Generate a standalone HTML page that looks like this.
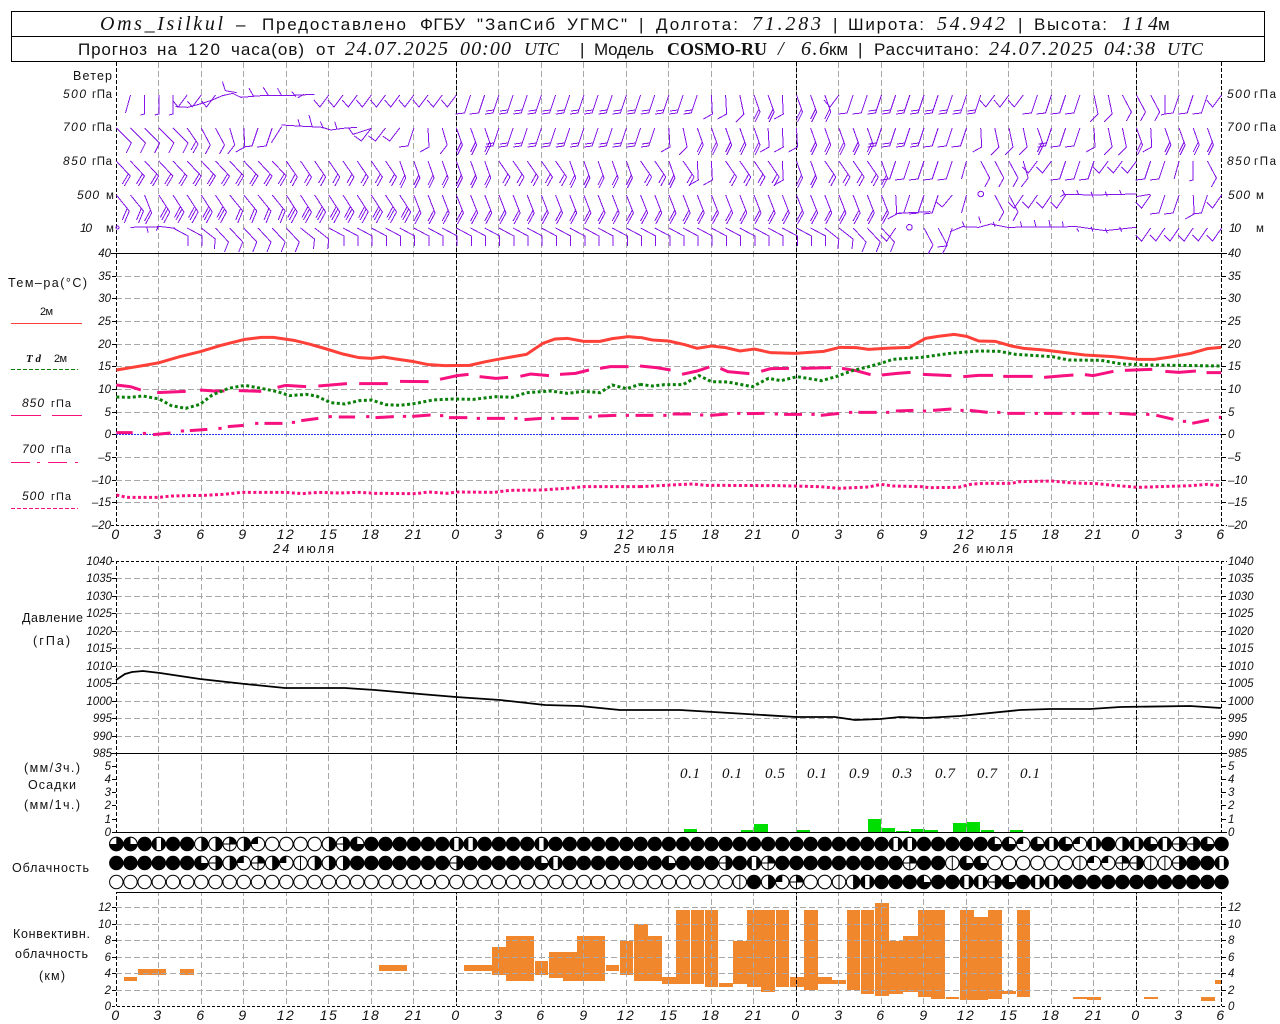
<!DOCTYPE html>
<html><head><meta charset="utf-8"><title>Oms_Isilkul</title>
<style>
html,body{margin:0;padding:0;background:#fff}
svg{display:block}
text{font-family:"Liberation Sans","Noto Sans CJK SC",sans-serif;fill:#111}
.i{font-style:italic}
.s{font-family:"Liberation Serif","Noto Serif CJK SC",serif;font-style:italic}
.t{font-size:17px}
.t .s{font-size:20px}
.l{font-size:12.5px}
.n{font-size:11.5px;font-style:italic}
.h{font-size:14px;font-style:italic;text-anchor:middle;letter-spacing:1.5px}
.z path{vector-effect:non-scaling-stroke;fill:none}
.e text{text-anchor:end}
.w{shape-rendering:crispEdges}
</style></head><body>
<svg xmlns="http://www.w3.org/2000/svg" width="1280" height="1024" viewBox="0 0 1280 1024">
<defs>
<clipPath id="c1"><rect x="0" y="62" width="1280" height="463"/><rect x="0" y="561" width="1280" height="271"/><rect x="0" y="892" width="1280" height="114"/></clipPath>
<clipPath id="c2"><rect x="0" y="62" width="1280" height="463"/><rect x="0" y="561" width="1280" height="192"/><rect x="0" y="892" width="1280" height="114"/></clipPath>
<path id="a" d="M0 0L14 15L8 25M12 13L6 23"/>
<path id="b" d="M0 0L11 16L6 25M9 13L4 22"/>
<path id="c" d="M0 0L6 17L1 27M5 14L0 24"/>
<path id="d" d="M0 0L15 15L10 25"/>
<path id="e" d="M0 0L9 17L4 26"/>
<path id="f" d="M0 0L5 17L-2 26"/>
<path id="g" d="M0 0L-6 18L-15 19"/>
<path id="g0" d="M0 0L-5 18"/>
<path id="i" d="M0 0L0 19L-4 20"/>
<path id="h" d="M0 0L-6 18L-14 19M-5 15L-13 16"/>
<path id="r" d="M0 0L1 19L-8 24"/>
<path id="q" d="M0 0L4 19L-4 27"/>
<path id="u" d="M0 0L11 17L5 28M9 14L3 25M7.5 11.5L1.5 22.5"/>
<path id="v" d="M0 0L7 18L1 29M6 15L0 26"/>
<path id="w" d="M0 0L13 16L8 28M11 13L6 25"/>
<path id="x" d="M0 0L15 8L15 18"/>
<path id="y" d="M0 0L13 14L9 24"/>
<path id="z" d="M0 0L14 11L13 21"/>
<g id="A"><use href="#a"/><use href="#a" x="14.17"/><use href="#a" x="28.34"/><use href="#a" x="42.51"/></g>
<g id="B"><use href="#b"/><use href="#b" x="14.17"/><use href="#b" x="28.34"/><use href="#b" x="42.51"/></g>
<g id="C"><use href="#c"/><use href="#c" x="14.17"/><use href="#c" x="28.34"/><use href="#c" x="42.51"/></g>
<g id="H"><use href="#h"/><use href="#h" x="14.17"/><use href="#h" x="28.34"/><use href="#h" x="42.51"/></g>
<g id="X"><use href="#x"/><use href="#x" x="14.17"/><use href="#x" x="28.34"/><use href="#x" x="42.51"/></g>
<g id="U"><use href="#u"/><use href="#u" x="14.17"/><use href="#u" x="28.34"/><use href="#u" x="42.51"/></g>
<g id="V"><use href="#v"/><use href="#v" x="14.17"/><use href="#v" x="28.34"/><use href="#v" x="42.51"/></g>
<g id="oO"><circle r="6.7" fill="#fff" stroke="#000"/></g>
<g id="oH"><circle r="6.7" fill="#fff" stroke="#000"/><path d="M0-7A7 7 0 0 1 0 7Z"/></g>
<g id="oI"><circle r="7.1"/><rect x="-2.2" y="-6" width="4.4" height="12" fill="#fff"/></g>
<g id="oL"><circle r="6.7" fill="#fff" stroke="#000"/><path d="M0-7V7" stroke="#000" fill="none"/></g>
<g id="oR"><circle r="6.7" fill="#fff" stroke="#000"/><path d="M0 0V-7A7 7 0 1 0 7 0Z"/></g>
<g id="oQ"><circle r="6.7" fill="#fff" stroke="#000"/><path d="M0 0H-7A7 7 0 1 0 0-7Z"/></g>
<g id="oB"><circle r="6.7" fill="#fff" stroke="#000"/><path d="M0 0H-7A7 7 0 0 1 0-7Z"/></g>
<g id="oK"><circle r="6.7" fill="#fff" stroke="#000"/><path d="M0 0V-7A7 7 0 0 1 7 0Z"/><path d="M0-7V7M-7 0H7" stroke="#000" fill="none"/></g>
<g id="oE"><circle r="6.7" fill="#fff" stroke="#000"/><path d="M0-7A7 7 0 0 1 0 7Z"/><path d="M-7 0H7" stroke="#000" fill="none"/></g>
</defs>
<rect width="1280" height="1024" fill="#fff"/>

<!-- header -->
<g fill="none" stroke="#000" shape-rendering="crispEdges"><rect x="11.5" y="11.5" width="1253" height="50"/><path d="M11 36.5H1265"/></g>
<g class="t">
<text class="s" x="100" y="30" textLength="123">Oms_Isilkul</text>
<text x="236" y="30">–</text>
<text x="262" y="30" textLength="144">Предоставлено</text>
<text x="420" y="30" textLength="45">ФГБУ</text>
<text x="477" y="30" textLength="78">"ЗапСиб</text>
<text x="567" y="30" textLength="60">УГМС"</text>
<text x="639" y="30">|</text>
<text x="656" y="30" textLength="82">Долгота:</text>
<text class="s" x="752" y="30" textLength="69">71.283</text>
<text x="833" y="30">|</text>
<text x="848" y="30" textLength="76">Широта:</text>
<text class="s" x="937" y="30" textLength="68">54.942</text>
<text x="1018" y="30">|</text>
<text x="1034" y="30" textLength="73">Высота:</text>
<text class="s" x="1122" y="30" textLength="36">114</text>
<text x="1158" y="30" textLength="11">м</text>
<text x="78" y="55" textLength="69">Прогноз</text>
<text x="157" y="55" textLength="20">на</text>
<text x="188" y="55" textLength="32">120</text>
<text x="231" y="55" textLength="73">часа(ов)</text>
<text x="316" y="55" textLength="19">от</text>
<text class="s" x="345" y="55" textLength="103">24.07.2025</text>
<text class="s" x="460" y="55" textLength="51">00:00</text>
<text class="s" x="524" y="55" textLength="35" style="font-size:18px">UTC</text>
<text x="580" y="55">|</text>
<text x="594" y="55" textLength="60">Модель</text>
<text x="667" y="55" textLength="100" style="font-family:'Liberation Serif',serif;font-weight:bold;font-size:18px">COSMO-RU</text>
<text class="s" x="778" y="55">/</text>
<text class="s" x="801" y="55" textLength="28">6.6</text>
<text x="829" y="55" textLength="19">км</text>
<text x="858" y="55">|</text>
<text x="874" y="55" textLength="105">Рассчитано:</text>
<text class="s" x="989" y="55" textLength="104">24.07.2025</text>
<text class="s" x="1104" y="55" textLength="51">04:38</text>
<text class="s" x="1167" y="55" textLength="36" style="font-size:18px">UTC</text>
</g>

<!-- convective bars (under grid) -->
<g fill="#f0872d" shape-rendering="crispEdges">
<rect x="124" y="977" width="13" height="4"/><rect x="138" y="969" width="28" height="6"/><rect x="180" y="969" width="14" height="6"/><rect x="379" y="965" width="28" height="6"/><rect x="464" y="965" width="28" height="6"/><rect x="492" y="947" width="14" height="28"/><rect x="506" y="936" width="28" height="45"/><rect x="535" y="961" width="13" height="14"/><rect x="549" y="952" width="14" height="26"/><rect x="563" y="952" width="14" height="29"/><rect x="577" y="936" width="28" height="45"/><rect x="606" y="965" width="13" height="6"/><rect x="620" y="941" width="13" height="34"/><rect x="634" y="924" width="14" height="57"/><rect x="648" y="936" width="14" height="45"/><rect x="662" y="977" width="14" height="7"/><rect x="676" y="910" width="14" height="74"/><rect x="691" y="910" width="13" height="74"/><rect x="705" y="910" width="13" height="77"/><rect x="719" y="983" width="14" height="4"/><rect x="733" y="941" width="14" height="43"/><rect x="747" y="910" width="14" height="77"/><rect x="761" y="910" width="14" height="82"/><rect x="776" y="910" width="13" height="77"/><rect x="790" y="977" width="14" height="10"/><rect x="804" y="910" width="14" height="80"/><rect x="818" y="977" width="14" height="7"/><rect x="832" y="980" width="14" height="4"/><rect x="847" y="910" width="13" height="80"/><rect x="861" y="910" width="13" height="84"/><rect x="875" y="903" width="14" height="93"/><rect x="889" y="941" width="14" height="53"/><rect x="903" y="936" width="15" height="56"/><rect x="918" y="910" width="13" height="87"/><rect x="931" y="910" width="14" height="89"/><rect x="946" y="997" width="13" height="2"/><rect x="960" y="910" width="14" height="90"/><rect x="974" y="917" width="14" height="83"/><rect x="988" y="910" width="14" height="89"/><rect x="1002" y="991" width="14" height="3"/><rect x="1017" y="910" width="13" height="87"/><rect x="1073" y="997" width="14" height="2"/><rect x="1087" y="997" width="14" height="3"/><rect x="1144" y="997" width="14" height="2"/><rect x="1201" y="997" width="14" height="4"/><rect x="1215" y="980" width="7" height="4"/>
</g>
<!-- precip bars -->
<g fill="#00dd00" shape-rendering="crispEdges">
<rect x="684" y="829" width="13" height="3"/><rect x="741" y="830" width="13" height="2"/><rect x="754" y="824" width="14" height="8"/><rect x="797" y="830" width="13" height="2"/><rect x="868" y="819" width="13" height="13"/><rect x="881" y="828" width="14" height="4"/><rect x="896" y="831" width="13" height="1"/><rect x="911" y="829" width="14" height="3"/><rect x="925" y="830" width="13" height="2"/><rect x="953" y="823" width="14" height="9"/><rect x="967" y="822" width="13" height="10"/><rect x="981" y="830" width="13" height="2"/><rect x="1010" y="830" width="13" height="2"/>
</g>

<!-- grid -->
<g fill="none" stroke="#a8a8a8" stroke-dasharray="6 3" shape-rendering="crispEdges">
<path clip-path="url(#c1)" d="M158.5 62V1006M201.5 62V1006M243.5 62V1006M286.5 62V1006M328.5 62V1006M371.5 62V1006M413.5 62V1006M456.5 62V1006M498.5 62V1006M541.5 62V1006M583.5 62V1006M626.5 62V1006M668.5 62V1006M711.5 62V1006M753.5 62V1006M796.5 62V1006M838.5 62V1006M881.5 62V1006M923.5 62V1006M966.5 62V1006M1008.5 62V1006M1051.5 62V1006M1093.5 62V1006M1136.5 62V1006M1178.5 62V1006"/>
<path d="M116 276.5H1221M116 298.5H1221M116 321.5H1221M116 344.5H1221M116 366.5H1221M116 389.5H1221M116 412.5H1221M116 457.5H1221M116 480.5H1221M116 502.5H1221"/>
<path d="M116 578.5H1221M116 596.5H1221M116 613.5H1221M116 631.5H1221M116 648.5H1221M116 666.5H1221M116 683.5H1221M116 701.5H1221M116 718.5H1221M116 736.5H1221"/>
<path d="M116 907.5H1221M116 924.5H1221M116 940.5H1221M116 957.5H1221M116 973.5H1221M116 990.5H1221"/>
</g>
<g fill="none" stroke="#000" shape-rendering="crispEdges">
<path clip-path="url(#c2)" stroke-dasharray="4 2" d="M456.5 62V1006M796.5 62V1006M1136.5 62V1006"/>
<path clip-path="url(#c1)" stroke-dasharray="4 2" d="M116.5 62V1006M1221.5 62V1006"/>
<path d="M111 253.5H1227M111 753.5H1227M112 832.5H1227M116 892.5H1221"/>
<path stroke-dasharray="3 2" d="M111 525.5H1227M111 561.5H1227M112 1006.5H1227"/>
<path d="M112 276.5h4M112 298.5h4M112 321.5h4M112 344.5h4M112 366.5h4M112 389.5h4M112 412.5h4M112 434.5h4M112 457.5h4M112 480.5h4M112 502.5h4M1221 276.5h5M1221 298.5h5M1221 321.5h5M1221 344.5h5M1221 366.5h5M1221 389.5h5M1221 412.5h5M1221 434.5h5M1221 457.5h5M1221 480.5h5M1221 502.5h5M112 578.5h4M112 596.5h4M112 613.5h4M112 631.5h4M112 648.5h4M112 666.5h4M112 683.5h4M112 701.5h4M112 718.5h4M112 736.5h4M1221 578.5h5M1221 596.5h5M1221 613.5h5M1221 631.5h5M1221 648.5h5M1221 666.5h5M1221 683.5h5M1221 701.5h5M1221 718.5h5M1221 736.5h5M112 766.5h4M112 779.5h4M112 792.5h4M112 805.5h4M112 819.5h4M1221 766.5h5M1221 779.5h5M1221 792.5h5M1221 805.5h5M1221 819.5h5M112 907.5h4M112 924.5h4M112 940.5h4M112 957.5h4M112 973.5h4M112 990.5h4M1221 907.5h5M1221 924.5h5M1221 940.5h5M1221 957.5h5M1221 973.5h5M1221 990.5h5"/>
</g>
<path d="M116 434.5H1221" fill="none" stroke="#2030ff" stroke-dasharray="2 1" shape-rendering="crispEdges"/>

<!-- wind barbs -->
<g class="w" fill="none" stroke="#8414e8" stroke-width="1">
<!-- zigzag (SW) barbs drawn directly -->
<path d="M187.1 95l-9 12-5-6M201.3 95l-9 12-5-6M215.5 95l-9 12-5-6M328.9 95l-9 12-6-7M343 95l-9 12-6-7M357.2 95l-9 12-6-7M371.4 95l-9 12-6-7M385.5 95l-9 12-6-7M399.7 95l-9 12-6-7M413.9 95l-9 12-6-7M428 95l-9 12-6-7M442.2 95l-9 12-6-7M456.4 95l-9 12-6-7M839 95l-9 12-6-7M994.8 95l-9 12-6-7M1009 95l-9 12-6-7M1023.2 95l-9 12-6-7M1221.6 95l-9 12-6-7"/>
<path d="M371.4 128l-10 13-7-5M385.5 128l-10 13-7-5M399.7 128l-10 13-7-5"/>
<path d="M1037.4 161l-9 12-6-6M1051.5 161l-9 12-6-6M1108.2 161l-9 12-6-6M1122.4 161l-9 12-6-6M1136.5 161l-9 12-6-6"/>
<path d="M952.3 195l-10 12-6-5M1023.2 195l-9 13-6-6M1037.4 195l-9 13-6-6M1051.5 195l-9 13-6-6M1065.7 195l-9 13-6-6M1150.7 195l-9 13-6-6M1221.6 195l-9 13-6-6"/>
<path d="M895.7 228l-9 13-6-6M1150.7 228l-9 13-6-6M1164.9 228l-9 13-6-6M1179.1 228l-9 13-6-6M1193.2 228l-9 13-6-6M1207.4 228l-9 13-6-6M1221.6 228l-9 13-6-6"/>
<g transform="translate(0,95)">
<use href="#g0" x="130.5"/><use href="#i" x="144.6"/><use href="#i" x="158.8"/><use href="#i" x="173"/>
<use href="#g" x="470.6"/><use href="#g" x="484.7"/>
<use href="#H" x="498.9"/><use href="#H" x="555.6"/><use href="#h" x="612.3"/><use href="#H" x="626.4"/><use href="#h" x="683.1"/><use href="#h" x="697.3"/>
<use href="#r" x="711.4"/><use href="#r" x="725.6"/><use href="#q" x="739.8"/><use href="#c" x="754"/><use href="#c" x="768.1"/><use href="#r" x="782.3"/><use href="#c" x="796.5"/><use href="#c" x="810.6"/><use href="#c" x="824.8"/><use href="#g" x="853.1"/><use href="#g" x="867.3"/>
<use href="#H" x="881.5"/><use href="#H" x="938.2"/><use href="#g" x="1037.4"/><use href="#g" x="1051.5"/><use href="#g" x="1065.7"/><use href="#g" x="1079.9"/><use href="#q" x="1094"/><use href="#q" x="1108.2"/><use href="#e" x="1122.4"/><use href="#e" x="1136.5"/><use href="#e" x="1150.7"/><use href="#i" x="1164.9"/><use href="#g" x="1179.1"/><use href="#g" x="1193.2"/><use href="#g" x="1207.4"/>
</g>
<g transform="translate(0,128)">
<use href="#d" x="116.3"/><use href="#d" x="130.5"/><use href="#d" x="144.6"/><use href="#d" x="158.8"/><use href="#d" x="173"/><use href="#b" x="187.1"/><use href="#e" x="201.3"/><use href="#e" x="215.5"/><use href="#f" x="229.7"/><use href="#r" x="243.8"/><use href="#g" x="258"/><use href="#g" x="272.2"/>
<use href="#g" x="413.9"/><use href="#r" x="428"/><use href="#f" x="442.2"/><use href="#c" x="456.4"/><use href="#c" x="470.6"/><use href="#c" x="484.7"/>
<use href="#H" x="498.9"/><use href="#H" x="555.6"/><use href="#h" x="612.3"/><use href="#h" x="626.4"/><use href="#h" x="640.6"/><use href="#h" x="654.8"/>
<use href="#r" x="668.9"/><use href="#q" x="683.1"/><use href="#C" x="697.3"/><use href="#c" x="754"/><use href="#r" x="768.1"/><use href="#r" x="782.3"/><use href="#r" x="796.5"/><use href="#C" x="810.6"/><use href="#c" x="867.3"/>
<use href="#H" x="881.5"/><use href="#g" x="938.2"/><use href="#g" x="952.3"/><use href="#g" x="966.5"/><use href="#r" x="980.7"/><use href="#q" x="994.8"/><use href="#q" x="1009"/><use href="#q" x="1023.2"/><use href="#c" x="1037.4"/><use href="#h" x="1051.5"/><use href="#g" x="1065.7"/><use href="#g" x="1079.9"/><use href="#r" x="1094"/><use href="#q" x="1108.2"/><use href="#q" x="1122.4"/><use href="#c" x="1136.5"/><use href="#r" x="1150.7"/><use href="#C" x="1164.9"/>
</g>
<g transform="translate(0,161)">
<use href="#A" x="116.3"/><use href="#A" x="173"/><use href="#A" x="229.7"/><use href="#B" x="286.3"/><use href="#B" x="343"/><use href="#C" x="399.7"/><use href="#c" x="456.4"/><use href="#c" x="470.6"/><use href="#c" x="484.7"/><use href="#B" x="498.9"/><use href="#b" x="555.6"/><use href="#C" x="569.7"/><use href="#c" x="626.4"/><use href="#b" x="640.6"/><use href="#b" x="654.8"/><use href="#c" x="668.9"/><use href="#b" x="683.1"/><use href="#r" x="697.3"/><use href="#r" x="711.4"/><use href="#B" x="725.6"/><use href="#r" x="782.3"/><use href="#c" x="796.5"/><use href="#c" x="810.6"/><use href="#B" x="824.8"/><use href="#c" x="881.5"/><use href="#g" x="895.7"/><use href="#g" x="909.8"/><use href="#g" x="924"/><use href="#g" x="938.2"/><use href="#g" x="952.3"/><use href="#g0" x="966.5"/><use href="#e" x="980.7"/><use href="#e" x="994.8"/><use href="#e" x="1009"/><use href="#f" x="1023.2"/><use href="#g" x="1065.7"/><use href="#g" x="1079.9"/><use href="#g" x="1094"/><use href="#g" x="1150.7"/><use href="#g" x="1164.9"/><use href="#g0" x="1179.1"/><use href="#i" x="1193.2"/><use href="#e" x="1207.4"/>
</g>
<g transform="translate(0,195)">
<use href="#w" x="116.3"/><use href="#w" x="130.5"/><use href="#v" x="144.6"/><use href="#U" x="158.8"/><use href="#u" x="215.5"/><use href="#w" x="229.7"/><use href="#w" x="243.8"/><use href="#w" x="258"/><use href="#w" x="272.2"/><use href="#U" x="286.3"/><use href="#U" x="343"/><use href="#u" x="399.7"/><use href="#V" x="413.9"/><use href="#V" x="470.6"/><use href="#V" x="527.2"/><use href="#V" x="583.9"/><use href="#V" x="640.6"/><use href="#V" x="697.3"/><use href="#V" x="754"/><use href="#V" x="810.6"/><use href="#v" x="867.3"/><use href="#v" x="881.5"/><use href="#r" x="895.7"/><use href="#g" x="909.8"/><use href="#g" x="924"/><use href="#g" x="938.2"/><use href="#g0" x="966.5"/><use href="#e" x="994.8"/><use href="#e" x="1009"/><use href="#g" x="1164.9"/><use href="#g" x="1179.1"/><use href="#r" x="1193.2"/><use href="#g" x="1207.4"/>
</g>
<g transform="translate(0,228)">
<use href="#x" x="173"/><use href="#x" x="187.1"/><use href="#z" x="201.3"/><use href="#y" x="215.5"/><use href="#y" x="229.7"/><use href="#y" x="243.8"/><use href="#y" x="258"/><use href="#y" x="272.2"/><use href="#y" x="286.3"/><use href="#z" x="300.5"/><use href="#z" x="314.7"/><use href="#X" x="328.9"/><use href="#X" x="385.5"/><use href="#X" x="442.2"/><use href="#X" x="498.9"/><use href="#X" x="555.6"/><use href="#X" x="612.3"/><use href="#X" x="668.9"/><use href="#X" x="725.6"/><use href="#x" x="782.3"/><use href="#x" x="796.5"/><use href="#x" x="810.6"/><use href="#z" x="824.8"/><use href="#z" x="839"/><use href="#y" x="853.1"/><use href="#y" x="867.3"/><use href="#y" x="881.5"/><use href="#e" x="924"/><use href="#e" x="938.2"/><use href="#g" x="952.3"/>
</g>
<circle cx="909.4" cy="227.3" r="2.8"/><circle cx="980.8" cy="194" r="2.8"/><circle cx="117.5" cy="227.5" r="1.5"/>
</g>
<g class="z w" stroke="#8414e8">
<g transform="scale(.40816,.33333)">
<path d="M430 320L460 322L490 312L520 300L545 287L570 280L590 292L640 287L700 287L770 283M545 245L552 272L580 278M610 265L622 290M645 262L658 287M680 265L690 287M715 275L725 290M745 283L730 293"/>
<path d="M665 428L690 380M690 375L730 378L790 382L810 390L840 385L875 382M730 358L735 378M757 345L765 380M785 365L792 385M820 365L825 385M855 385L865 403L910 385"/>
<path d="M320 682L395 680L430 685M360 683L363 698M388 680L383 692"/>
</g>
<g transform="translate(640,0) scale(.40816,.33333)">
<path d="M630 640L712 635M1030 590L1040 583L1110 585L1215 582M1035 570L1040 583M1070 570L1075 585M1105 575L1110 592M1140 575L1145 590M1175 570L1180 585M1215 590L1250 583"/>
<path d="M760 695L790 680L830 682L860 672L900 682L1070 680L1140 692L1215 682M830 650L835 670M790 665L795 680M865 665L870 680M932 665L935 680M966 660L970 680M1002 660L1005 680M1035 665L1037 680M1070 685L1075 695M1105 680L1110 695M1140 685L1145 700M1175 680L1180 695"/>
</g>
</g>

<!-- temperature curves -->
<g class="z" transform="translate(0,260) scale(.40816,.33333)" stroke-width="3">
<path stroke="#f7107f" stroke-dasharray="3 2.5" d="M285 705L310 712L390 712L420 708L500 706L550 703L590 697L700 697L740 701L780 697L830 699L880 697L920 700L1020 701L1050 696L1095 700L1120 696L1210 697L1250 691L1330 690L1350 688L1400 684L1430 680L1568 680"/>
<path stroke="#f7107f" d="M285 518L325 518M350 520h8M375 524L418 519M443 513h8M465 512L508 508M535 505h8M558 500L597 496M625 490h8M648 490L692 490M715 487h8M738 482L780 475M805 470h8M830 471L870 471M897 470h8M920 473L965 470M987 469h8M1010 469L1055 465M1078 467h8M1100 473L1145 473M1168 475h8M1193 475L1237 475M1260 475h8M1285 479L1327 475M1350 475h8M1375 475L1418 475M1442 471h8M1465 468L1510 466M1533 466h8M1557 466L1568 466"/>
<path stroke="#f7107f" d="M285 375L320 380L345 390M385 398L455 394M490 390L525 393L550 393M585 392L640 394M680 382L700 376L750 380M780 378L850 371M880 371L950 371M980 364L1050 365M1078 358L1120 347L1148 343M1175 350L1215 355L1245 352M1275 349L1300 342L1345 347M1372 343L1410 340L1443 330M1470 325L1495 320L1540 320"/>
<path stroke="#0a800a" stroke-dasharray="3 2.5" d="M285 411L320 412L350 408L390 417L420 437L455 445L490 433L520 405L560 385L600 376L640 385L680 395L710 407L750 403L775 408L810 428L845 432L880 422L910 420L945 434L980 436L1020 430L1060 420L1110 417L1160 418L1215 410L1255 412L1290 398L1350 393L1390 400L1430 394L1470 398L1500 375L1535 386L1568 373"/>
<path stroke="#ff4038" d="M285 330L350 317L390 308L440 290L490 275L545 255L600 238L640 232L670 232L720 241L760 253L800 267L840 282L880 293L910 295L940 291L970 297L1010 304L1050 314L1090 317L1150 316L1190 305L1220 298L1290 283L1330 250L1360 237L1390 235L1430 244L1470 244L1500 236L1540 230L1568 233"/>
</g>
<g class="z" transform="translate(640,260) scale(.40816,.33333)" stroke-width="3">
<path stroke="#f7107f" stroke-dasharray="3 2.5" d="M0 680L60 676L130 672L160 676L340 677L440 680L490 685L560 681L590 673L620 678L690 680L710 683L780 682L810 673L840 670L910 670L930 665L1010 663L1060 669L1120 671L1160 676L1220 682L1270 680L1350 677L1390 673L1424 677"/>
<path stroke="#f7107f" d="M0 466L33 466M57 466h8M80 462L125 462M147 465h8M172 466L215 462M238 460h8M262 461L305 460M330 462h8M353 463L397 463M420 463h8M443 466L488 460M512 457h8M535 457L580 457M603 457h8M627 453L670 451M693 453h8M718 451L763 447M785 451h8M808 451L852 457M875 457h8M900 460L943 460M967 460h8M990 460L1035 460M1057 460h8M1082 460L1125 460M1148 460h8M1175 460L1215 463M1240 463h8M1265 466L1307 478M1330 484h8M1353 490L1394 480M1418 472h6"/>
<path stroke="#f7107f" d="M0 318L40 323L75 330M103 343L140 333L170 321M197 325L215 335L268 341M297 334L320 326L365 325M395 325L468 323M495 325L530 332L565 344M592 345L630 340L663 337M693 343L763 347M792 350L830 346L865 346M890 349L962 349M990 352L1030 348L1062 345M1090 344L1110 347L1160 334M1188 331L1255 328M1287 334L1320 337L1362 333M1388 338L1424 338"/>
<path stroke="#0a800a" stroke-dasharray="3 2.5" d="M0 373L30 378L60 374L105 374L145 347L175 365L215 366L275 380L315 355L345 362L385 350L445 362L480 350L520 332L560 320L590 310L620 298L690 292L760 280L830 273L880 274L920 283L1010 290L1050 300L1130 301L1180 312L1250 315L1424 318"/>
<path stroke="#ff4038" d="M0 232L30 240L70 243L110 254L140 265L175 258L210 263L245 273L280 267L320 278L380 280L450 274L490 262L530 263L560 268L600 265L660 262L700 235L730 229L770 223L800 229L830 243L870 244L910 258L940 265L990 270L1030 276L1090 285L1160 290L1220 298L1260 298L1300 291L1350 280L1390 266L1424 262"/>
</g>

<!-- pressure -->
<path d="M116 680L125 674L132 672L143 671L160 673L200 679L245 684L285 688L345 688L375 690L420 694L456 697L500 700L545 705L580 706L620 710L680 710L730 713L796 717L835 717L855 720L880 719L900 717L925 718L960 716L1020 710L1050 709L1090 709L1120 707L1190 706L1221 708" fill="none" stroke="#000" stroke-width="1.8"/>

<!-- legend lines -->
<g fill="none" shape-rendering="crispEdges">
<path d="M11 323.5H82" stroke="#ff4038"/>
<path d="M11 369.5H78" stroke="#0a800a" stroke-dasharray="4 2"/>
<path d="M11 415.5H41M52 415.5H82" stroke="#f7107f"/>
<path d="M11 462.5H30M37 462.5H40M48 462.5H67M75 462.5H78" stroke="#f7107f"/>
<path d="M11 508.5H78" stroke="#f7107f" stroke-dasharray="4 2"/>
</g>

<!-- clouds -->
<g fill="none" stroke-linecap="round" stroke-dasharray="0 14.17">
<path d="M116.3 844H1222" stroke="#000" stroke-width="14.4"/>
<path d="M116.3 863H1222" stroke="#000" stroke-width="14.4"/>
<path d="M116.3 882H1222" stroke="#000" stroke-width="14.4"/>
<path d="M116.3 882H726" stroke="#fff" stroke-width="12.4"/>
</g>
<g transform="translate(0,844)">
<use href="#oQ" x="116.3"/><use href="#oR" x="130.5"/><use href="#oI" x="158.8"/><use href="#oH" x="201.3"/><use href="#oH" x="215.5"/><use href="#oK" x="229.7"/><use href="#oH" x="243.8"/><use href="#oB" x="258"/><use href="#oO" x="272.2"/><use href="#oO" x="286.3"/><use href="#oO" x="300.5"/><use href="#oO" x="314.7"/><use href="#oH" x="328.9"/><use href="#oE" x="343"/><use href="#oR" x="357.2"/><use href="#oI" x="456.4"/><use href="#oI" x="470.6"/><use href="#oI" x="541.4"/><use href="#oI" x="895.7"/><use href="#oI" x="909.8"/><use href="#oR" x="994.8"/><use href="#oR" x="1009"/><use href="#oB" x="1023.2"/><use href="#oR" x="1037.4"/><use href="#oI" x="1051.5"/><use href="#oR" x="1065.7"/><use href="#oB" x="1079.9"/><use href="#oI" x="1094"/><use href="#oH" x="1122.4"/><use href="#oI" x="1136.5"/><use href="#oR" x="1150.7"/><use href="#oI" x="1164.9"/><use href="#oE" x="1179.1"/><use href="#oE" x="1193.2"/><use href="#oR" x="1207.4"/>
</g>
<g transform="translate(0,863)">
<use href="#oR" x="201.3"/><use href="#oE" x="215.5"/><use href="#oH" x="229.7"/><use href="#oB" x="243.8"/><use href="#oK" x="258"/><use href="#oH" x="272.2"/><use href="#oB" x="286.3"/><use href="#oL" x="300.5"/><use href="#oH" x="314.7"/><use href="#oH" x="328.9"/><use href="#oH" x="343"/><use href="#oE" x="456.4"/><use href="#oR" x="541.4"/><use href="#oI" x="555.6"/><use href="#oR" x="668.9"/><use href="#oE" x="725.6"/><use href="#oI" x="754"/><use href="#oK" x="768.1"/><use href="#oK" x="909.8"/><use href="#oL" x="952.3"/><use href="#oR" x="966.5"/><use href="#oR" x="980.7"/><use href="#oO" x="994.8"/><use href="#oO" x="1009"/><use href="#oO" x="1023.2"/><use href="#oO" x="1037.4"/><use href="#oO" x="1051.5"/><use href="#oO" x="1065.7"/><use href="#oL" x="1079.9"/><use href="#oB" x="1094"/><use href="#oB" x="1108.2"/><use href="#oK" x="1122.4"/><use href="#oE" x="1136.5"/><use href="#oL" x="1150.7"/><use href="#oL" x="1164.9"/><use href="#oE" x="1179.1"/><use href="#oI" x="1221.6"/>
</g>
<g transform="translate(0,882)">
<use href="#oL" x="739.8"/><use href="#oH" x="768.1"/><use href="#oB" x="782.3"/><use href="#oK" x="796.5"/><use href="#oO" x="810.6"/><use href="#oO" x="824.8"/><use href="#oL" x="839"/><use href="#oH" x="853.1"/><use href="#oI" x="867.3"/><use href="#oR" x="924"/><use href="#oI" x="966.5"/><use href="#oI" x="980.7"/><use href="#oE" x="994.8"/><use href="#oR" x="1009"/><use href="#oI" x="1037.4"/><use href="#oI" x="1051.5"/>
</g>

<!-- hour labels -->
<g class="h">
<text x="116" y="539">0</text><text x="158" y="539">3</text><text x="201" y="539">6</text><text x="243" y="539">9</text><text x="286" y="539">12</text><text x="329" y="539">15</text><text x="371" y="539">18</text><text x="414" y="539">21</text><text x="456" y="539">0</text><text x="499" y="539">3</text><text x="541" y="539">6</text><text x="584" y="539">9</text><text x="626" y="539">12</text><text x="669" y="539">15</text><text x="711" y="539">18</text><text x="754" y="539">21</text><text x="796" y="539">0</text><text x="839" y="539">3</text><text x="881" y="539">6</text><text x="924" y="539">9</text><text x="966" y="539">12</text><text x="1009" y="539">15</text><text x="1051" y="539">18</text><text x="1094" y="539">21</text><text x="1136" y="539">0</text><text x="1179" y="539">3</text><text x="1221" y="539">6</text>
<text x="116" y="1020">0</text><text x="158" y="1020">3</text><text x="201" y="1020">6</text><text x="243" y="1020">9</text><text x="286" y="1020">12</text><text x="329" y="1020">15</text><text x="371" y="1020">18</text><text x="414" y="1020">21</text><text x="456" y="1020">0</text><text x="499" y="1020">3</text><text x="541" y="1020">6</text><text x="584" y="1020">9</text><text x="626" y="1020">12</text><text x="669" y="1020">15</text><text x="711" y="1020">18</text><text x="754" y="1020">21</text><text x="796" y="1020">0</text><text x="839" y="1020">3</text><text x="881" y="1020">6</text><text x="924" y="1020">9</text><text x="966" y="1020">12</text><text x="1009" y="1020">15</text><text x="1051" y="1020">18</text><text x="1094" y="1020">21</text><text x="1136" y="1020">0</text><text x="1179" y="1020">3</text><text x="1221" y="1020">6</text>
</g>
<g class="l">
<text x="273" y="553" textLength="61"><tspan class="i">24</tspan> июля</text>
<text x="614" y="553" textLength="60"><tspan class="i">25</tspan> июля</text>
<text x="953" y="553" textLength="60"><tspan class="i">26</tspan> июля</text>
</g>

<!-- y tick labels left -->
<g class="n e">
<text x="111" y="257">40</text><text x="111" y="280">35</text><text x="111" y="302">30</text><text x="111" y="325">25</text><text x="111" y="348">20</text><text x="111" y="370">15</text><text x="111" y="393">10</text><text x="111" y="416">5</text><text x="111" y="438">0</text><text x="111" y="461">–5</text><text x="111" y="484">–10</text><text x="111" y="506">–15</text><text x="111" y="529">–20</text>
<text x="112" y="565">1040</text><text x="112" y="582">1035</text><text x="112" y="600">1030</text><text x="112" y="617">1025</text><text x="112" y="635">1020</text><text x="112" y="652">1015</text><text x="112" y="670">1010</text><text x="112" y="687">1005</text><text x="112" y="705">1000</text><text x="112" y="722">995</text><text x="112" y="740">990</text><text x="112" y="757">985</text>
<text x="111" y="770">5</text><text x="111" y="783">4</text><text x="111" y="796">3</text><text x="111" y="809">2</text><text x="111" y="823">1</text><text x="111" y="836">0</text>
<text x="111" y="911">12</text><text x="111" y="928">10</text><text x="111" y="944">8</text><text x="111" y="961">6</text><text x="111" y="977">4</text><text x="111" y="994">2</text><text x="111" y="1010">0</text>
</g>
<!-- y tick labels right -->
<g class="n">
<text x="1228" y="257">40</text><text x="1228" y="280">35</text><text x="1228" y="302">30</text><text x="1228" y="325">25</text><text x="1228" y="348">20</text><text x="1228" y="370">15</text><text x="1228" y="393">10</text><text x="1228" y="416">5</text><text x="1228" y="438">0</text><text x="1228" y="461">–5</text><text x="1228" y="484">–10</text><text x="1228" y="506">–15</text><text x="1228" y="529">–20</text>
<text x="1228" y="565">1040</text><text x="1228" y="582">1035</text><text x="1228" y="600">1030</text><text x="1228" y="617">1025</text><text x="1228" y="635">1020</text><text x="1228" y="652">1015</text><text x="1228" y="670">1010</text><text x="1228" y="687">1005</text><text x="1228" y="705">1000</text><text x="1228" y="722">995</text><text x="1228" y="740">990</text><text x="1228" y="757">985</text>
<text x="1228" y="770">5</text><text x="1228" y="783">4</text><text x="1228" y="796">3</text><text x="1228" y="809">2</text><text x="1228" y="823">1</text><text x="1228" y="836">0</text>
<text x="1228" y="911">12</text><text x="1228" y="928">10</text><text x="1228" y="944">8</text><text x="1228" y="961">6</text><text x="1228" y="977">4</text><text x="1228" y="994">2</text><text x="1228" y="1010">0</text>
</g>

<!-- wind labels -->
<g class="n">
<text x="73" y="80" textLength="39" style="font-size:12.5px;font-style:normal">Ветер</text>
<text x="63" y="98" textLength="23" style="font-size:12px">500</text><text x="92" y="98" textLength="20" style="font-style:normal">гПа</text>
<text x="63" y="131" textLength="23" style="font-size:12px">700</text><text x="92" y="131" textLength="20" style="font-style:normal">гПа</text>
<text x="63" y="165" textLength="23" style="font-size:12px">850</text><text x="92" y="165" textLength="20" style="font-style:normal">гПа</text>
<text x="77" y="199" textLength="22" style="font-size:12px">500</text><text x="106" y="199" style="font-style:normal">м</text>
<text x="80" y="232" textLength="12" style="font-size:12px">10</text><text x="106" y="232" style="font-style:normal">м</text>
<text x="1227" y="98" textLength="23" style="font-size:12px">500</text><text x="1254" y="98" textLength="22" style="font-style:normal">гПа</text>
<text x="1227" y="131" textLength="23" style="font-size:12px">700</text><text x="1254" y="131" textLength="22" style="font-style:normal">гПа</text>
<text x="1227" y="165" textLength="23" style="font-size:12px">850</text><text x="1254" y="165" textLength="22" style="font-style:normal">гПа</text>
<text x="1228" y="199" textLength="22" style="font-size:12px">500</text><text x="1256" y="199" style="font-style:normal">м</text>
<text x="1229" y="232" textLength="12" style="font-size:12px">10</text><text x="1256" y="232" style="font-style:normal">м</text>
</g>

<!-- left legends -->
<g class="l">
<text x="8" y="287" textLength="79">Тем–ра(°С)</text>
<text x="40" y="315" textLength="13" style="font-size:11px">2м</text>
<text x="26" y="362" textLength="15" style="font-size:11px;font-family:'Liberation Serif',serif;font-style:italic;font-weight:bold">Td</text><text x="54" y="362" textLength="13" style="font-size:11px">2м</text>
<text class="i" x="22" y="407" textLength="22" style="font-size:12px">850</text><text x="51" y="407" textLength="20" style="font-size:11px">гПа</text>
<text class="i" x="22" y="453" textLength="22" style="font-size:12px">700</text><text x="51" y="453" textLength="20" style="font-size:11px">гПа</text>
<text class="i" x="22" y="500" textLength="22" style="font-size:12px">500</text><text x="51" y="500" textLength="20" style="font-size:11px">гПа</text>
<text x="22" y="622" textLength="61">Давление</text>
<text x="33" y="645" textLength="37">(гПа)</text>
<text x="24" y="772" textLength="56">(мм/<tspan class="i">3</tspan>ч.)</text>
<text x="28" y="789" textLength="48">Осадки</text>
<text x="24" y="809" textLength="56">(мм/1ч.)</text>
<text x="12" y="872" textLength="77">Облачность</text>
<text x="13" y="938" textLength="77">Конвективн.</text>
<text x="15" y="958" textLength="73">облачность</text>
<text x="39" y="980" textLength="26">(км)</text>
</g>

<!-- precip values -->
<g style="font-size:15px">
<text class="s" x="680" y="778" textLength="20">0.1</text><text class="s" x="722" y="778" textLength="20">0.1</text><text class="s" x="765" y="778" textLength="20">0.5</text><text class="s" x="807" y="778" textLength="20">0.1</text><text class="s" x="849" y="778" textLength="20">0.9</text><text class="s" x="892" y="778" textLength="20">0.3</text><text class="s" x="935" y="778" textLength="20">0.7</text><text class="s" x="977" y="778" textLength="20">0.7</text><text class="s" x="1020" y="778" textLength="20">0.1</text>
</g>
</svg>
</body></html>
